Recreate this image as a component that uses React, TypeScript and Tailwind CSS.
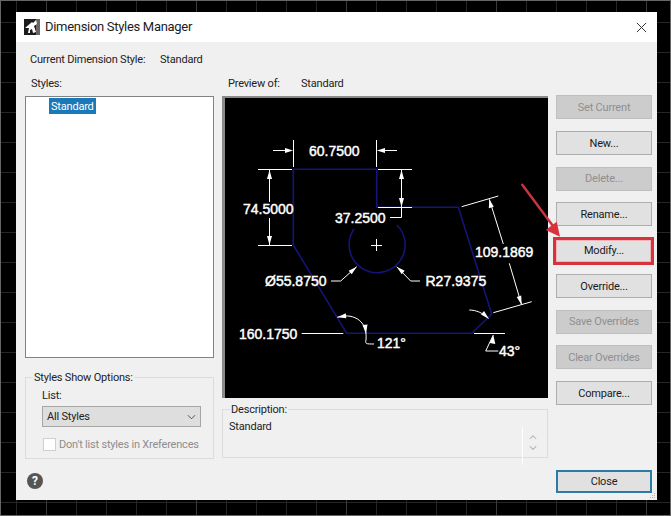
import React from "react";

const Btn = ({ label, off }: { label: string; off?: boolean }) => (
  <div
    className={`h-6 w-[96px] pt-[2px] flex items-center justify-center border ${
      off ? "bg-[#cccccc] border-[#bfbfbf] text-[#8f8f8f]" : "bg-[#e1e1e1] border-[#adadad] text-[#1a1a1a]"
    }`}
  >
    {label}
  </div>
);

// preview drawing, numbers are screen coordinates
const Preview = () => (
  <svg viewBox="225 98 323 299" className="w-[323px] h-[299px] block">
    <g stroke="#14147a" strokeWidth="1.6" fill="none">
      <path d="M293.3 169.3H376.7V207.3H458.3L491.7 314L471.7 333.3H346.7L293.3 245Z" />
      <path d="M397 225A28 28 0 1 1 354 229" />
    </g>
    <g stroke="#fff" strokeWidth="1" fill="none">
      <path d="M293.5 140V167M376.5 140V167M273 150.5H291M378 150.5H397" />
      <path d="M258 169.5H292M378 169.5H412M378 207.5H412M258 245.5H292" />
      <path d="M269.5 170V202M269.5 218V245M401.5 170V217.5H390" />
      <path d="M371 245.5H382M376.5 239V251" />
      <path d="M461.7 206.7L498.3 196M493.3 312.7L531.7 301.7M489.3 199.3L503.3 244M509.3 263.3L521.7 305" />
      <path d="M331 281H340.7L356.7 266.7M420 281H410.7L396.7 266.7" />
      <path d="M301.7 333.5H343.3M474 333.5H505" />
      <path d="M337.3 317.3C350 313 368 318 366 340C365 344 366 344 374 344" />
      <path d="M498.3 351H485.7L493.3 335M469.3 310C476 310 483 313 488.3 318.3" />
    </g>
    <g fill="#fff">
      <path d="M293 150.5l-8-2.5v5zM377 150.5l8-2.5v5zM269.5 170l-2.5 9h5zM269.5 245l-2.5-9h5zM401.5 170l-2.5 9h5zM401.5 207l-2.5-9h5zM356.7 266.7l-8 4 3 3.5zM396.7 266.7l8 4-3 3.5z" />
      <path d="M489.3 199.3l-.5 9 5-1.5zM521.7 305l-5-8 4.5-1.5zM337.3 317.3l8.500-4 .5 5zM366 334l-3.500-9 5-.5zM489 319l-8-4.500 3-3.500zM493.3 335l-3.500 8 5.500 1z" />
    </g>
    <g className="tracking-normal" fill="#fff" stroke="#fff" strokeWidth="0.45" fontFamily="'Liberation Sans', sans-serif" fontSize="14">
      <text x="309" y="156">60.7500</text>
      <text x="243" y="214">74.5000</text>
      <text x="335" y="223">37.2500</text>
      <text x="475" y="257">109.1869</text>
      <text x="265" y="286">Ø55.8750</text>
      <text x="425.500" y="286">R27.9375</text>
      <text x="239" y="339">160.1750</text>
      <text x="377" y="348">121°</text>
      <text x="499" y="356">43°</text>
    </g>
  </svg>
);

export default function App() {
  return (
    <div className="relative w-[671px] h-[516px] overflow-hidden border border-[#666] bg-black bg-[linear-gradient(to_right,#3a3a3a_1px,transparent_1px),linear-gradient(to_right,#262626_1px,transparent_1px),linear-gradient(to_bottom,#262626_1px,transparent_1px)] bg-[size:150px_150px,30px_30px,30px_30px] bg-[position:45px_0,15px_0,0_21px] pt-[11px] pl-[15px] font-['Roboto','Liberation_Sans',sans-serif] text-[11px] tracking-[-0.2px] text-[#222]">
      <div className="relative w-[641px] h-[488px] bg-[#f0f0f0]">
        {/* Title bar */}
        <div className="h-[30px] bg-white flex items-center pl-2 pr-[10px]">
          <svg viewBox="0 0 16 16" className="w-4 h-4">
            <rect width="16" height="16" fill="#1c1c1c" />
            <rect x="12" width="4" height="16" fill="#666" />
            <path d="M1 9L8 3l1 1 3-3 1 4-3 2 2 6-3 1-1-4-2 1 0 3-2 0L5 9z" fill="#fff" />
          </svg>
          <span className="ml-[5px] text-[13px] tracking-[-0.3px] text-[#1c1c1c]">Dimension Styles Manager</span>
          <svg viewBox="0 0 12 12" className="w-[11px] h-[11px] ml-auto">
            <path d="M1 1L11 11M11 1L1 11" stroke="#222" strokeWidth="1" />
          </svg>
        </div>

        {/* Current style */}
        <div className="flex h-4 pt-[2px] mt-[9px] ml-[14px] items-center">
          <span className="w-[130px]">Current Dimension Style:</span>
          <span>Standard</span>
        </div>

        <div className="flex mt-2 pl-[9px]">
          {/* Left column */}
          <div className="w-[189px]">
            <div className="h-4 pt-[2px] pl-[6px] flex items-center">Styles:</div>
            <div className="mt-[5px] h-[262px] bg-white border border-[#828282] pl-[23px] pt-px">
              <span className="inline-block h-4 leading-[18px] px-[2px] bg-[#1a79b8] text-white">Standard</span>
            </div>
            <fieldset className="mt-[11px] h-[90px] border border-[#dcdcdc] pl-4">
              <legend className="ml-[-9px] px-px h-4 leading-[18px]">Styles Show Options:</legend>
              <div className="h-4 leading-[18px] mt-[2px]">List:</div>
              <div className="mt-[3px] w-[159px] h-[21px] pt-px bg-[#dedede] border border-[#a6a6a6] flex items-center pl-1 pr-[4px] justify-between">
                <span>All Styles</span>
                <svg viewBox="0 0 10 6" className="w-[9px] h-[6px]">
                  <path d="M1 1l4 4 4-4" stroke="#444" fill="none" />
                </svg>
              </div>
              <div className="mt-2 ml-px flex items-center whitespace-nowrap text-[#8d8d8d]">
                <div className="w-[13px] h-[13px] bg-white border border-[#cfcfcf]" />
                <span className="ml-[3px] pt-[2px]">Don't list styles in Xreferences</span>
              </div>
            </fieldset>
          </div>

          {/* Preview column */}
          <div className="w-[326px] ml-2">
            <div className="h-4 pt-[2px] flex items-center pl-[6px]">
              <span className="w-[73px]">Preview of:</span>
              <span>Standard</span>
            </div>
            <div className="mt-[5px] w-[326px] h-[302px] border-t-2 border-l-[3px] border-[#8a8a8a] bg-black">
              <Preview />
            </div>
            <fieldset className="mt-[3px] h-[57px] w-[326px] border border-[#dcdcdc] pl-[6px] relative">
              <legend className="ml-px px-px h-4 leading-[18px]">Description:</legend>
              <div className="leading-[18px] h-4 mt-px">Standard</div>
              <div className="absolute right-[24px] top-[10px] h-[38px] w-px bg-white" />
              <svg viewBox="0 0 10 22" className="absolute right-[10px] top-[17px] w-[8px] h-[18px]">
                <path d="M1 6l4-4 4 4M1 15l4 4 4-4" stroke="#b5b5b5" fill="none" strokeWidth="1.3" />
              </svg>
            </fieldset>
          </div>

          {/* Buttons */}
          <div className="ml-2 w-[96px] pt-5 flex flex-col gap-[11.75px]">
            <Btn label="Set Current" off />
            <Btn label="New..." />
            <Btn label="Delete..." off />
            <Btn label="Rename..." />
            <Btn label="Modify..." />
            <Btn label="Override..." />
            <Btn label="Save Overrides" off />
            <Btn label="Clear Overrides" off />
            <Btn label="Compare..." />
          </div>
        </div>

        {/* Footer */}
        <div className="flex items-start justify-between mt-[11px] pl-[11px] pr-[5px]">
          <div className="mt-[3px] w-4 h-4 rounded-full bg-[#555] text-white flex items-center justify-center text-[12px] font-bold">?</div>
          <div className="h-[23px] w-[96px] pt-px flex items-center justify-center bg-[#e1e1e1] border-2 border-[#2c7aa6]">Close</div>
        </div>

        <svg viewBox="0 0 7 7" className="absolute right-[1px] bottom-[1px] w-[7px] h-[7px]">
          <path d="M5 1h1v1H5zM3 3h1v1H3zM5 3h1v1H5zM1 5h1v1H1zM3 5h1v1H3zM5 5h1v1H5z" fill="#b8b8b8" />
        </svg>

        {/* Red annotation: box round Modify and arrow */}
        <div className="absolute left-[537px] top-[225px] w-[101px] h-[28px] border-[3px] border-[#d5343f] shadow-[inset_0_0_0_1px_#efb4b8]" />
        <svg viewBox="0 0 60 70" className="absolute left-[500px] top-[168px] w-[60px] h-[70px]">
          <path d="M5.700 4L37 46" stroke="#c9333f" strokeWidth="2.500" />
          <path d="M44 56.700L29.700 50L40.700 41.700z" fill="#d8323c" />
        </svg>
      </div>
    </div>
  );
}
